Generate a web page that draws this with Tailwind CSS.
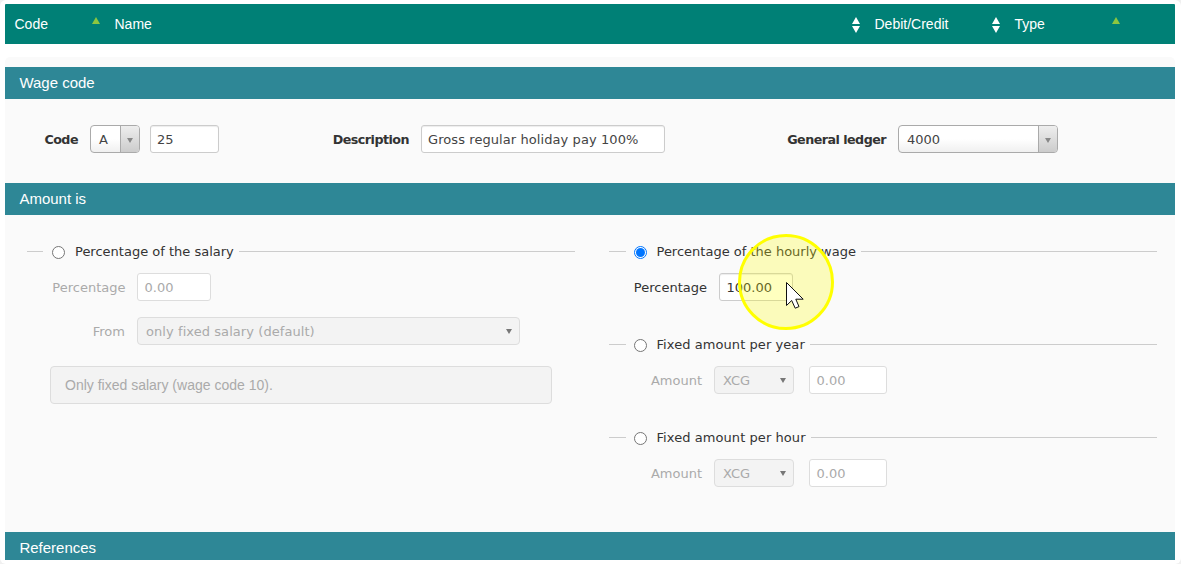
<!DOCTYPE html>
<html lang="en">
<head>
    <meta charset="UTF-8">
    <meta name="viewport" content="width=device-width, initial-scale=1.0">
    <title>Wage code</title>
    <script src="https://cdn.jsdelivr.net/npm/@tailwindcss/browser@4"></script>
</head>
<body class="relative h-[564px] overflow-hidden bg-[#f0f0f0] font-['DejaVu_Sans',sans-serif] text-[13px] text-[#333]">
    <div class="h-[564px] rounded-md bg-white px-[5px] pt-1 pr-[6px]">

        <!-- Table header -->
        <div class="flex h-10 items-center rounded-t-[1px] bg-[#008076] font-['Liberation_Sans',sans-serif] text-[14px] text-white">
            <div class="flex w-[100px] items-center pl-[9.5px]">
                <span class="w-[77px]">Code</span>
                <svg class="-mt-[7px]" width="8" height="7" viewBox="0 0 8 7"><path d="M4 0L8 7H0z" fill="#8dc63f"/></svg>
            </div>
            <div class="flex w-[760px] items-center pl-[9.5px]">
                <span class="w-[737px]">Name</span>
                <svg class="mt-[2px] shrink-0" width="8" height="16" viewBox="0 0 8 16"><path d="M4 0L8 7H0zM0 9H8L4 16z" fill="#fff"/></svg>
            </div>
            <div class="flex w-[140px] items-center pl-[9.5px]">
                <span class="w-[117px]">Debit/Credit</span>
                <svg class="mt-[2px] shrink-0" width="8" height="16" viewBox="0 0 8 16"><path d="M4 0L8 7H0zM0 9H8L4 16z" fill="#fff"/></svg>
            </div>
            <div class="flex items-center pl-[9.5px]">
                <span class="w-[97px]">Type</span>
                <svg class="-mt-[7px]" width="8" height="7" viewBox="0 0 8 7"><path d="M4 0L8 7H0z" fill="#8dc63f"/></svg>
            </div>
        </div>

        <div class="mt-[13px] h-[503px] rounded-t-[5px] bg-[#fafafa] pt-[10px]">

            <!-- Wage code -->
            <div class="h-8 bg-[#2e8796] pl-[14.4px] font-['Liberation_Sans',sans-serif] text-[15px] leading-8 text-white">Wage code</div>
            <div class="flex h-[84px] items-center pb-1">
                <div class="w-[73px] pt-px text-right text-[12.7px] font-bold tracking-[-0.53px]">Code</div>
                <div class="ml-3 flex h-7 w-[50px] overflow-hidden rounded border border-[#aaa] bg-linear-to-b from-white from-50% to-[#f0f0f0] text-[#444]">
                    <span class="flex-1 pl-2 leading-[27px]">A</span>
                    <span class="flex w-[19px] items-center justify-center border-l border-[#aaa] bg-linear-to-b from-[#eee] to-[#ccc] pr-px">
                        <svg class="mt-[3px]" width="6" height="5" viewBox="0 0 6 5"><path d="M0 0H6L3 5z" fill="#888"/></svg>
                    </span>
                </div>
                <div class="ml-[10px] h-7 w-[69px] rounded-[3px] border border-[#ccc] bg-white pl-[6px] leading-[27px] text-[#444] shadow-[inset_0_1px_1px_rgba(0,0,0,0.075)]">25</div>
                <div class="w-[190px] pt-px text-right text-[12.7px] font-bold tracking-[-0.53px]">Description</div>
                <div class="ml-3 h-7 w-[244px] rounded-[3px] border border-[#ccc] bg-white pl-[6px] leading-[27px] tracking-[0.08px] text-[#444] shadow-[inset_0_1px_1px_rgba(0,0,0,0.075)]">Gross regular holiday pay 100%</div>
                <div class="w-[221px] pt-px text-right text-[12.7px] font-bold tracking-[-0.53px]">General ledger</div>
                <div class="ml-3 flex h-7 w-[160px] overflow-hidden rounded border border-[#aaa] bg-linear-to-b from-white from-50% to-[#f0f0f0] text-[#444]">
                    <span class="flex-1 pl-2 leading-[27px]">4000</span>
                    <span class="flex w-[19px] items-center justify-center border-l border-[#aaa] bg-linear-to-b from-[#eee] to-[#ccc] pr-px">
                        <svg class="mt-[3px]" width="6" height="5" viewBox="0 0 6 5"><path d="M0 0H6L3 5z" fill="#888"/></svg>
                    </span>
                </div>
            </div>

            <!-- Amount is -->
            <div class="h-8 bg-[#2e8796] pl-[14.4px] font-['Liberation_Sans',sans-serif] text-[15px] leading-8 text-white">Amount is</div>
            <div class="flex h-[317px] gap-[34px] pt-[26px] pl-[22px]">
                <div class="w-[548px]">
                    <div class="flex h-[21px] items-center">
                        <span class="-mt-[1px] h-px w-4 bg-[#ccc]"></span>
                        <span class="mt-[2px] ml-[9px] size-[13px] rounded-full border border-[#767676] bg-white"></span>
                        <span class="ml-[10px] w-[164px] whitespace-nowrap">Percentage of the salary</span>
                        <span class="-mt-[1px] h-px flex-1 bg-[#ccc]"></span>
                    </div>
                    <div class="mt-[11px] flex h-7 items-center text-[#aaa]">
                        <span class="w-[98.5px] pt-px text-right">Percentage</span>
                        <span class="ml-[11.5px] h-7 w-[74px] rounded-[3px] border border-[#ddd] bg-white pl-[6.5px] leading-[27px]">0.00</span>
                    </div>
                    <div class="mt-4 flex h-7 items-center text-[#aaa]">
                        <span class="w-[98px] pt-px text-right">From</span>
                        <span class="ml-3 flex h-7 w-[383px] items-center justify-between rounded border border-[#ddd] bg-[#f3f3f3] pr-[7px] pl-2">
                            <span class="pt-px tracking-[0.07px]">only fixed salary (default)</span>
                            <svg class="mt-px" width="6" height="5" viewBox="0 0 6 5"><path d="M0 0H6L3 5z" fill="#777"/></svg>
                        </span>
                    </div>
                    <div class="mt-[21px] ml-[23px] h-[38px] w-[502px] rounded border border-[#ddd] bg-[#f3f3f3] pl-[14px] font-['Liberation_Sans',sans-serif] text-[14px] leading-9 text-[#aaa]">Only fixed salary (wage code 10).</div>
                </div>

                <div class="w-[548px]">
                    <div class="flex h-[21px] items-center">
                        <span class="-mt-[1px] h-px w-[17px] bg-[#ccc]"></span>
                        <span class="mt-[2px] ml-2 flex size-[13px] items-center justify-center rounded-full border border-[#0075ff] bg-white">
                            <span class="size-[9px] rounded-full bg-[#0075ff]"></span>
                        </span>
                        <span class="ml-[9.5px] w-[204.5px] whitespace-nowrap">Percentage of the hourly wage</span>
                        <span class="-mt-[1px] h-px flex-1 bg-[#ccc]"></span>
                    </div>
                    <div class="mt-[11px] flex h-7 items-center">
                        <span class="w-[98px] pt-px text-right">Percentage</span>
                        <span class="ml-3 h-7 w-[74px] rounded-[3px] border border-[#ccc] bg-white pl-[6.5px] leading-[27px] shadow-[inset_0_1px_1px_rgba(0,0,0,0.075)]">100.00</span>
                    </div>

                    <div class="mt-[33px] flex h-[21px] items-center">
                        <span class="-mt-[1px] h-px w-[17px] bg-[#ccc]"></span>
                        <span class="mt-[2px] ml-2 size-[13px] rounded-full border border-[#767676] bg-white"></span>
                        <span class="ml-[9.5px] w-[153.5px] tracking-[0.07px] whitespace-nowrap">Fixed amount per year</span>
                        <span class="-mt-[1px] h-px flex-1 bg-[#ccc]"></span>
                    </div>
                    <div class="mt-[11px] flex h-7 items-center text-[#aaa]">
                        <span class="w-[93px] pt-px text-right">Amount</span>
                        <span class="ml-3 flex h-7 w-[80px] items-center justify-between rounded border border-[#ddd] bg-[#f3f3f3] pr-[7px] pl-2">
                            <span class="pt-px">XCG</span>
                            <svg class="mt-px" width="6" height="5" viewBox="0 0 6 5"><path d="M0 0H6L3 5z" fill="#777"/></svg>
                        </span>
                        <span class="ml-[15px] h-7 w-[78px] rounded-[3px] border border-[#ddd] bg-white pl-[6.5px] leading-[27px]">0.00</span>
                    </div>

                    <div class="mt-[33px] flex h-[21px] items-center">
                        <span class="-mt-[1px] h-px w-[17px] bg-[#ccc]"></span>
                        <span class="mt-[2px] ml-2 size-[13px] rounded-full border border-[#767676] bg-white"></span>
                        <span class="ml-[9.5px] w-[154.5px] tracking-[0.07px] whitespace-nowrap">Fixed amount per hour</span>
                        <span class="-mt-[1px] h-px flex-1 bg-[#ccc]"></span>
                    </div>
                    <div class="mt-[11px] flex h-7 items-center text-[#aaa]">
                        <span class="w-[93px] pt-px text-right">Amount</span>
                        <span class="ml-3 flex h-7 w-[80px] items-center justify-between rounded border border-[#ddd] bg-[#f3f3f3] pr-[7px] pl-2">
                            <span class="pt-px">XCG</span>
                            <svg class="mt-px" width="6" height="5" viewBox="0 0 6 5"><path d="M0 0H6L3 5z" fill="#777"/></svg>
                        </span>
                        <span class="ml-[15px] h-7 w-[78px] rounded-[3px] border border-[#ddd] bg-white pl-[6.5px] leading-[27px]">0.00</span>
                    </div>
                </div>
            </div>

            <!-- References -->
            <div class="h-7 bg-[#2e8796] pl-[14.4px] font-['Liberation_Sans',sans-serif] text-[15px] leading-8 text-white">References</div>
        </div>
    </div>

    <!-- Pointer highlight -->
    <div class="absolute top-[234px] left-[738px] size-24 rounded-full border-3 border-[#ff0] bg-[#ff0]/25"></div>
    <svg class="absolute top-[281px] left-[785px]" width="21" height="30" viewBox="0 0 21 30">
        <path d="M1.5 1.5V24.5L6.7 19.5L10.2 27.2L14 25.6L10.8 18.2H18.2z" fill="#fff" stroke="#111" stroke-width="1"/>
    </svg>
</body>
</html>
